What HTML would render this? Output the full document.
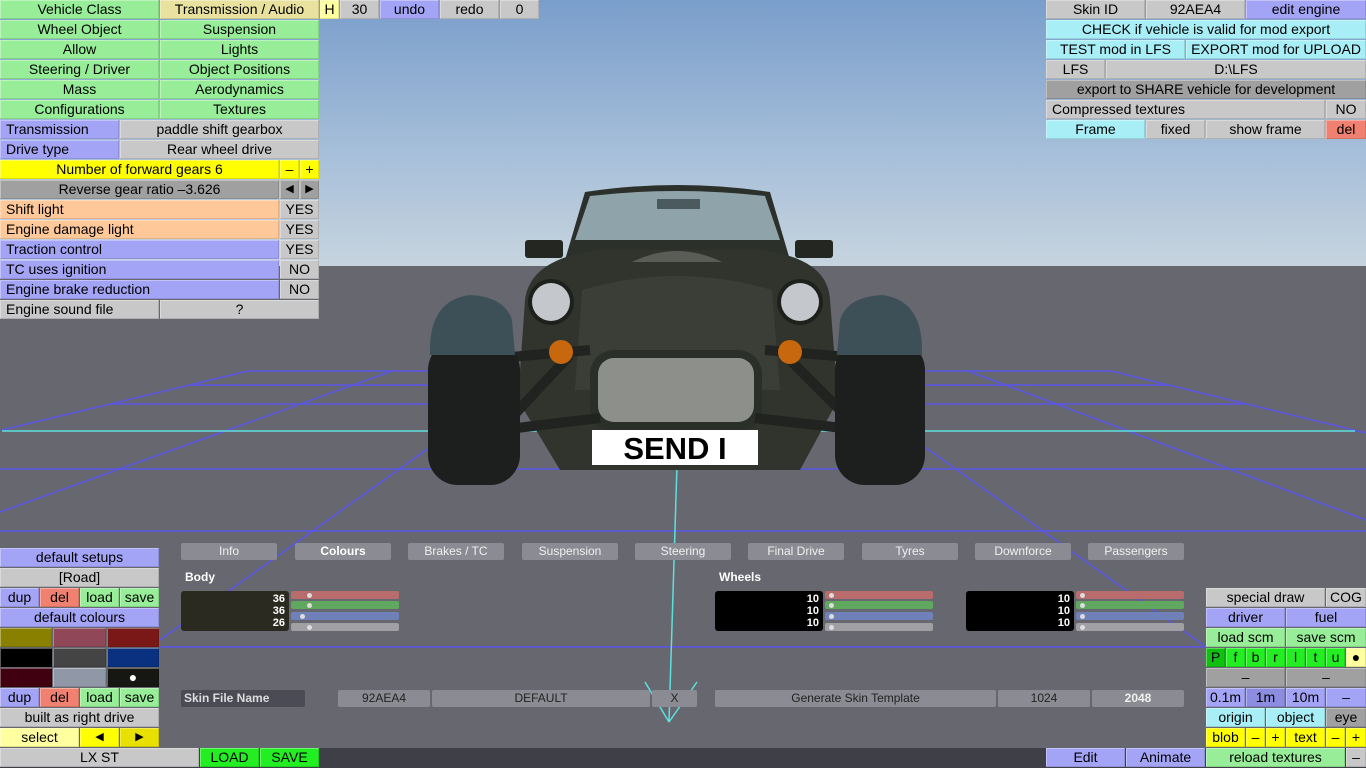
<!DOCTYPE html>
<html><head><meta charset="utf-8"><style>
*{margin:0;padding:0;box-sizing:border-box}
body{width:1366px;height:768px;overflow:hidden;position:relative;font-family:"Liberation Sans","DejaVu Sans",sans-serif;font-size:14px;color:#000;background:#66676f}
.b{position:absolute;height:19px;line-height:19px;text-align:center;white-space:nowrap;overflow:hidden;box-shadow:inset -1px -1px 0 rgba(0,0,0,.12),inset 1px 1px 0 rgba(255,255,255,.35)}
.l{text-align:left;padding-left:6px}
.g{background:#98ee98}.y{background:#e8e29e}.p{background:#a4a4f6}.r{background:#c8c8c8}.d{background:#a0a0a0}
.o{background:#ffc898}.Y{background:#ffff00}.c{background:#a8eef6}.R{background:#f08070}.G{background:#22ee22}.ly{background:#ffffa0}
.t{position:absolute;height:17px;line-height:17px;background:#8b8c93;color:#f0f0f0;font-size:12px;text-align:center;border-radius:2px}
.s{position:absolute;height:8px;border-radius:2px;width:108px}
.s i{position:absolute;top:2px;width:5px;height:5px;border-radius:50%;background:#ddd}
.bx{position:absolute;width:108px;height:40px;border-radius:3px;color:#fff;font-size:11px;font-weight:bold;text-align:right;padding-right:4px;line-height:12px;padding-top:2px}
.lb{position:absolute;color:#fff;font-size:12px;font-weight:bold}
</style></head><body>
<div style="position:absolute;left:0;top:0;width:1366px;height:266px;background:linear-gradient(#7a9ecb,#a8c0da 60%,#c6d4de)"></div>
<svg style="position:absolute;left:0;top:0" width="1366" height="768">
<g stroke="#5a55e8" stroke-width="1.5" fill="none">
<line x1="248" y1="371" x2="1111" y2="371"/><line x1="190" y1="385" x2="1168" y2="385"/><line x1="112" y1="404" x2="1245" y2="404"/>
<line x1="0" y1="469" x2="1366" y2="469"/><line x1="0" y1="531" x2="1366" y2="531"/><line x1="160" y1="647" x2="1206" y2="647"/>
<line x1="2" y1="430" x2="248" y2="371"/><line x1="1111" y1="371" x2="1366" y2="433"/>
<line x1="0" y1="512" x2="392" y2="371"/><line x1="968" y1="371" x2="1366" y2="520"/>
<line x1="440" y1="440" x2="160" y2="640"/><line x1="915" y1="440" x2="1206" y2="647"/>
</g>
<line x1="2" y1="431" x2="1355" y2="431" stroke="#5ee0e0" stroke-width="1.5"/>
<g stroke="#5ee0e0" stroke-width="1.5"><line x1="677" y1="465" x2="669" y2="722"/><line x1="645" y1="682" x2="669" y2="722"/><line x1="697" y1="682" x2="669" y2="722"/></g>
<!-- car -->
<path d="M585 192 Q677 178 770 192 L790 260 L565 260 Z" fill="#2c302b"/>
<path d="M590 196 Q677 186 765 196 L780 240 L575 240 Z" fill="#8fa3aa"/>
<rect x="657" y="199" width="43" height="10" fill="#4a5a5e"/>
<rect x="525" y="240" width="38" height="18" rx="3" fill="#242622"/><rect x="795" y="240" width="38" height="18" rx="3" fill="#242622"/>
<path d="M525 300 Q530 258 600 250 L760 250 Q828 258 830 300 L838 400 L800 470 L560 470 L518 400 Z" fill="#30342d"/>
<path d="M632 262 Q677 240 722 262 Z" fill="#5a5c58"/>
<path d="M582 290 Q677 262 772 290 L780 390 L575 390 Z" fill="#3a3e36"/>
<rect x="590" y="350" width="172" height="82" rx="24" fill="#2b2f29"/>
<rect x="598" y="358" width="156" height="64" rx="16" fill="#8c8f8a"/>
<circle cx="551" cy="302" r="23" fill="#1e201c"/><circle cx="551" cy="302" r="19" fill="#c4c8cc"/>
<circle cx="800" cy="302" r="23" fill="#1e201c"/><circle cx="800" cy="302" r="19" fill="#c4c8cc"/>
<g stroke="#20231f" stroke-width="10"><line x1="500" y1="358" x2="590" y2="350"/><line x1="860" y1="358" x2="765" y2="350"/><line x1="500" y1="430" x2="570" y2="355"/><line x1="860" y1="430" x2="785" y2="355"/><line x1="500" y1="430" x2="600" y2="418"/><line x1="860" y1="430" x2="755" y2="418"/></g>
<circle cx="561" cy="352" r="12" fill="#c8680e"/><circle cx="790" cy="352" r="12" fill="#c8680e"/>
<rect x="428" y="340" width="92" height="145" rx="30" fill="#1d1f1e"/><rect x="835" y="340" width="90" height="145" rx="30" fill="#1d1f1e"/>
<path d="M430 350 Q430 300 470 295 Q505 297 512 320 L515 355 L430 355Z" fill="#3d5058"/>
<path d="M922 350 Q922 300 882 295 Q847 297 840 320 L837 355 L922 355Z" fill="#3d5058"/>
<rect x="592" y="430" width="166" height="35" fill="#fff"/>
<text x="675" y="459" text-anchor="middle" font-family="Liberation Sans,sans-serif" font-weight="bold" font-size="31" fill="#000">SEND I</text>
</svg>

<!-- top left -->
<div class="b g" style="left:0;top:0;width:159px">Vehicle Class</div>
<div class="b y" style="left:160px;top:0;width:159px">Transmission / Audio</div>
<div class="b ly" style="left:320px;top:0;width:19px">H</div>
<div class="b r" style="left:340px;top:0;width:39px">30</div>
<div class="b p" style="left:380px;top:0;width:59px">undo</div>
<div class="b r" style="left:440px;top:0;width:59px">redo</div>
<div class="b r" style="left:500px;top:0;width:39px">0</div>
<div class="b g" style="left:0;top:20px;width:159px">Wheel Object</div><div class="b g" style="left:160px;top:20px;width:159px">Suspension</div>
<div class="b g" style="left:0;top:40px;width:159px">Allow</div><div class="b g" style="left:160px;top:40px;width:159px">Lights</div>
<div class="b g" style="left:0;top:60px;width:159px">Steering / Driver</div><div class="b g" style="left:160px;top:60px;width:159px">Object Positions</div>
<div class="b g" style="left:0;top:80px;width:159px">Mass</div><div class="b g" style="left:160px;top:80px;width:159px">Aerodynamics</div>
<div class="b g" style="left:0;top:100px;width:159px">Configurations</div><div class="b g" style="left:160px;top:100px;width:159px">Textures</div>
<div class="b p l" style="left:0;top:120px;width:119px">Transmission</div><div class="b r" style="left:120px;top:120px;width:199px">paddle shift gearbox</div>
<div class="b p l" style="left:0;top:140px;width:119px">Drive type</div><div class="b r" style="left:120px;top:140px;width:199px">Rear wheel drive</div>
<div class="b Y" style="left:0;top:160px;width:279px">Number of forward gears 6</div><div class="b Y" style="left:280px;top:160px;width:19px">–</div><div class="b Y" style="left:300px;top:160px;width:19px">+</div>
<div class="b d" style="left:0;top:180px;width:279px">Reverse gear ratio –3.626</div><div class="b d" style="left:280px;top:180px;width:19px;font-size:11px">◀</div><div class="b d" style="left:300px;top:180px;width:19px;font-size:11px">▶</div>
<div class="b o l" style="left:0;top:200px;width:279px">Shift light</div><div class="b r" style="left:280px;top:200px;width:39px">YES</div>
<div class="b o l" style="left:0;top:220px;width:279px">Engine damage light</div><div class="b r" style="left:280px;top:220px;width:39px">YES</div>
<div class="b p l" style="left:0;top:240px;width:279px">Traction control</div><div class="b r" style="left:280px;top:240px;width:39px">YES</div>
<div class="b p l" style="left:0;top:260px;width:279px">TC uses ignition</div><div class="b r" style="left:280px;top:260px;width:39px">NO</div>
<div class="b p l" style="left:0;top:280px;width:279px">Engine brake reduction</div><div class="b r" style="left:280px;top:280px;width:39px">NO</div>
<div class="b r l" style="left:0;top:300px;width:159px">Engine sound file</div><div class="b r" style="left:160px;top:300px;width:159px">?</div>

<!-- top right -->
<div class="b r" style="left:1046px;top:0;width:99px">Skin ID</div><div class="b r" style="left:1146px;top:0;width:99px">92AEA4</div><div class="b p" style="left:1246px;top:0;width:120px">edit engine</div>
<div class="b c" style="left:1046px;top:20px;width:320px">CHECK if vehicle is valid for mod export</div>
<div class="b c" style="left:1046px;top:40px;width:139px">TEST mod in LFS</div><div class="b c" style="left:1186px;top:40px;width:180px">EXPORT mod for UPLOAD</div>
<div class="b r" style="left:1046px;top:60px;width:59px">LFS</div><div class="b r" style="left:1106px;top:60px;width:260px">D:\LFS</div>
<div class="b d" style="left:1046px;top:80px;width:320px">export to SHARE vehicle for development</div>
<div class="b r l" style="left:1046px;top:100px;width:279px">Compressed textures</div><div class="b r" style="left:1326px;top:100px;width:40px">NO</div>
<div class="b c" style="left:1046px;top:120px;width:99px">Frame</div><div class="b r" style="left:1146px;top:120px;width:59px">fixed</div><div class="b r" style="left:1206px;top:120px;width:119px">show frame</div><div class="b R" style="left:1326px;top:120px;width:40px">del</div>

<!-- bottom left -->
<div class="b p" style="left:0;top:548px;width:159px">default setups</div>
<div class="b r" style="left:0;top:568px;width:159px">[Road]</div>
<div class="b p" style="left:0;top:588px;width:39px">dup</div><div class="b R" style="left:40px;top:588px;width:39px">del</div><div class="b g" style="left:80px;top:588px;width:39px">load</div><div class="b g" style="left:120px;top:588px;width:39px">save</div>
<div class="b p" style="left:0;top:608px;width:159px">default colours</div>
<div class="b" style="left:0;top:628px;width:52px;background:#8a8000"></div><div class="b" style="left:53px;top:628px;width:53px;background:#904858"></div><div class="b" style="left:107px;top:628px;width:52px;background:#7a1818"></div>
<div class="b" style="left:0;top:648px;width:52px;background:#000"></div><div class="b" style="left:53px;top:648px;width:53px;background:#444"></div><div class="b" style="left:107px;top:648px;width:52px;background:#0a3080"></div>
<div class="b" style="left:0;top:668px;width:52px;background:#400010"></div><div class="b" style="left:53px;top:668px;width:53px;background:#9098a8"></div><div class="b" style="left:107px;top:668px;width:52px;background:#161612;color:#fff">●</div>
<div class="b p" style="left:0;top:688px;width:39px">dup</div><div class="b R" style="left:40px;top:688px;width:39px">del</div><div class="b g" style="left:80px;top:688px;width:39px">load</div><div class="b g" style="left:120px;top:688px;width:39px">save</div>
<div class="b r" style="left:0;top:708px;width:159px">built as right drive</div>
<div class="b ly" style="left:0;top:728px;width:79px">select</div><div class="b Y" style="left:80px;top:728px;width:39px;font-size:11px">◀</div><div class="b" style="left:120px;top:728px;width:39px;font-size:11px;background:#e8e000">▶</div>
<div style="position:absolute;left:0;top:748px;width:1366px;height:20px;background:#3e3f47"></div>
<div class="b r" style="left:0;top:748px;width:199px">LX ST</div><div class="b G" style="left:200px;top:748px;width:59px">LOAD</div><div class="b G" style="left:260px;top:748px;width:59px">SAVE</div>
<div class="b p" style="left:1046px;top:748px;width:79px">Edit</div><div class="b p" style="left:1126px;top:748px;width:79px">Animate</div><div class="b g" style="left:1206px;top:748px;width:139px">reload textures</div><div class="b r" style="left:1346px;top:748px;width:20px">–</div>

<!-- bottom right -->
<div class="b r" style="left:1206px;top:588px;width:119px">special draw</div><div class="b r" style="left:1326px;top:588px;width:40px">COG</div>
<div class="b p" style="left:1206px;top:608px;width:79px">driver</div><div class="b p" style="left:1286px;top:608px;width:80px">fuel</div>
<div class="b g" style="left:1206px;top:628px;width:79px">load scm</div><div class="b g" style="left:1286px;top:628px;width:80px">save scm</div>
<div class="b" style="left:1206px;top:648px;width:19px;background:#10c010">P</div><div class="b G" style="left:1226px;top:648px;width:19px">f</div><div class="b G" style="left:1246px;top:648px;width:19px">b</div><div class="b G" style="left:1266px;top:648px;width:19px">r</div><div class="b G" style="left:1286px;top:648px;width:19px">l</div><div class="b G" style="left:1306px;top:648px;width:19px">t</div><div class="b G" style="left:1326px;top:648px;width:19px">u</div><div class="b ly" style="left:1346px;top:648px;width:20px">●</div>
<div class="b d" style="left:1206px;top:668px;width:79px">–</div><div class="b d" style="left:1286px;top:668px;width:80px">–</div>
<div class="b p" style="left:1206px;top:688px;width:39px">0.1m</div><div class="b" style="left:1246px;top:688px;width:39px;background:#8c8ce0">1m</div><div class="b p" style="left:1286px;top:688px;width:39px">10m</div><div class="b p" style="left:1326px;top:688px;width:40px">–</div>
<div class="b c" style="left:1206px;top:708px;width:59px">origin</div><div class="b c" style="left:1266px;top:708px;width:59px">object</div><div class="b d" style="left:1326px;top:708px;width:40px">eye</div>
<div class="b Y" style="left:1206px;top:728px;width:39px">blob</div><div class="b Y" style="left:1246px;top:728px;width:19px">–</div><div class="b Y" style="left:1266px;top:728px;width:19px">+</div><div class="b Y" style="left:1286px;top:728px;width:39px">text</div><div class="b Y" style="left:1326px;top:728px;width:19px">–</div><div class="b Y" style="left:1346px;top:728px;width:20px">+</div>

<!-- middle panel -->
<div class="t" style="left:181px;top:543px;width:96px">Info</div>
<div class="t" style="left:295px;top:543px;width:96px;color:#fff;font-weight:bold">Colours</div>
<div class="t" style="left:408px;top:543px;width:96px">Brakes / TC</div>
<div class="t" style="left:522px;top:543px;width:96px">Suspension</div>
<div class="t" style="left:635px;top:543px;width:96px">Steering</div>
<div class="t" style="left:748px;top:543px;width:96px">Final Drive</div>
<div class="t" style="left:862px;top:543px;width:96px">Tyres</div>
<div class="t" style="left:975px;top:543px;width:96px">Downforce</div>
<div class="t" style="left:1088px;top:543px;width:96px">Passengers</div>
<div class="lb" style="left:185px;top:570px">Body</div>
<div class="lb" style="left:719px;top:570px">Wheels</div>
<div class="bx" style="left:181px;top:591px;background:#2a2a20">36<br>36<br>26</div>
<div class="s" style="left:291px;top:591px;background:#b86c6c"><i style="left:16px"></i></div>
<div class="s" style="left:291px;top:601px;background:#60a860"><i style="left:16px"></i></div>
<div class="s" style="left:291px;top:612px;background:#7080b8"><i style="left:9px"></i></div>
<div class="s" style="left:291px;top:623px;background:#a0a0a4"><i style="left:16px"></i></div>
<div class="bx" style="left:715px;top:591px;background:#000">10<br>10<br>10</div>
<div class="s" style="left:825px;top:591px;background:#b86c6c"><i style="left:4px"></i></div>
<div class="s" style="left:825px;top:601px;background:#60a860"><i style="left:4px"></i></div>
<div class="s" style="left:825px;top:612px;background:#7080b8"><i style="left:4px"></i></div>
<div class="s" style="left:825px;top:623px;background:#a0a0a4"><i style="left:4px"></i></div>
<div class="bx" style="left:966px;top:591px;background:#000">10<br>10<br>10</div>
<div class="s" style="left:1076px;top:591px;background:#b86c6c"><i style="left:4px"></i></div>
<div class="s" style="left:1076px;top:601px;background:#60a860"><i style="left:4px"></i></div>
<div class="s" style="left:1076px;top:612px;background:#7080b8"><i style="left:4px"></i></div>
<div class="s" style="left:1076px;top:623px;background:#a0a0a4"><i style="left:4px"></i></div>
<div class="t" style="left:181px;top:690px;width:124px;background:#4a4b55;text-align:left;padding-left:3px;font-weight:bold;color:#ddd">Skin File Name</div>
<div class="t" style="left:338px;top:690px;width:92px;color:#222">92AEA4</div>
<div class="t" style="left:432px;top:690px;width:218px;color:#222">DEFAULT</div>
<div class="t" style="left:652px;top:690px;width:45px;color:#222">X</div>
<div class="t" style="left:715px;top:690px;width:281px;color:#222">Generate Skin Template</div>
<div class="t" style="left:998px;top:690px;width:92px;color:#222">1024</div>
<div class="t" style="left:1092px;top:690px;width:92px;font-weight:bold">2048</div>
</body></html>
